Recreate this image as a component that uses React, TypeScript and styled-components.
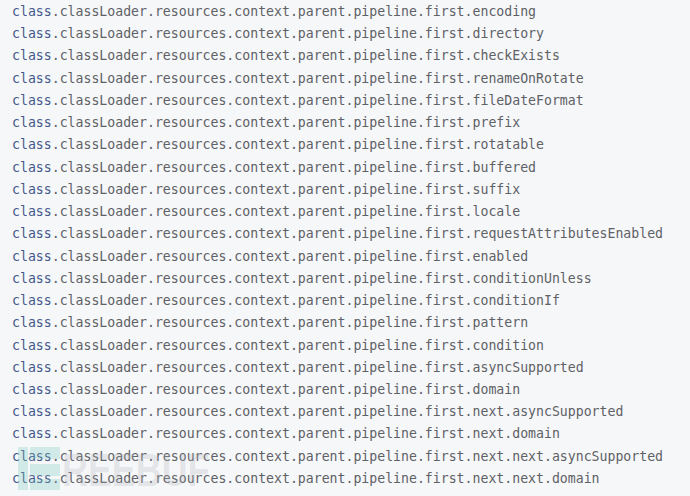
import React from "react";
import styled, { createGlobalStyle } from "styled-components";

const Global = createGlobalStyle`
  html, body { margin: 0; padding: 0; background: #f6f7f9; }
`;

const Block = styled.pre`
  position: relative;
  margin: 0;
  width: 690px;
  height: 496px;
  box-sizing: border-box;
  padding: 1px 0 0 12px;
  background: #f6f7f9;
  font-family: "DejaVu Sans Mono", "Liberation Mono", monospace;
  font-size: 13.2px;
  line-height: 22.24px;
  color: #5e6166;
  overflow: hidden;
`;

const Line = styled.div`
  white-space: pre;
`;

const Keyword = styled.span`
  color: #44598a;
`;

const Watermark = styled.div`
  position: absolute;
  left: 18px;
  top: 447px;
  display: flex;
  align-items: flex-end;
  gap: 2px;
  pointer-events: none;
`;

const WatermarkText = styled.span`
  display: inline-block;
  font-family: "Liberation Sans", "DejaVu Sans", sans-serif;
  font-weight: 700;
  font-size: 46px;
  line-height: 40px;
  color: rgba(175, 178, 182, 0.26);
  transform: scaleX(0.78);
  transform-origin: left bottom;
`;

const suffixes = [
  "encoding",
  "directory",
  "checkExists",
  "renameOnRotate",
  "fileDateFormat",
  "prefix",
  "rotatable",
  "buffered",
  "suffix",
  "locale",
  "requestAttributesEnabled",
  "enabled",
  "conditionUnless",
  "conditionIf",
  "pattern",
  "condition",
  "asyncSupported",
  "domain",
  "next.asyncSupported",
  "next.domain",
  "next.next.asyncSupported",
  "next.next.domain",
];

function Logo() {
  return (
    <svg width="42" height="43" viewBox="0 0 42 43" aria-hidden="true">
      <g fill="rgb(120, 200, 185)" fillOpacity="0.28">
        <rect x="0" y="0" width="10" height="43" />
        <rect x="12" y="0" width="30" height="12" />
        <rect x="12" y="17" width="30" height="12" />
        <rect x="12" y="32" width="30" height="11" />
      </g>
    </svg>
  );
}

export default function App() {
  return (
    <>
      <Global />
      <Block>
        {suffixes.map((s) => (
          <Line key={s}>
            <Keyword>class</Keyword>
            {".classLoader.resources.context.parent.pipeline.first." + s}
          </Line>
        ))}
        <Watermark>
          <Logo />
          <WatermarkText>REEBUF</WatermarkText>
        </Watermark>
      </Block>
    </>
  );
}
